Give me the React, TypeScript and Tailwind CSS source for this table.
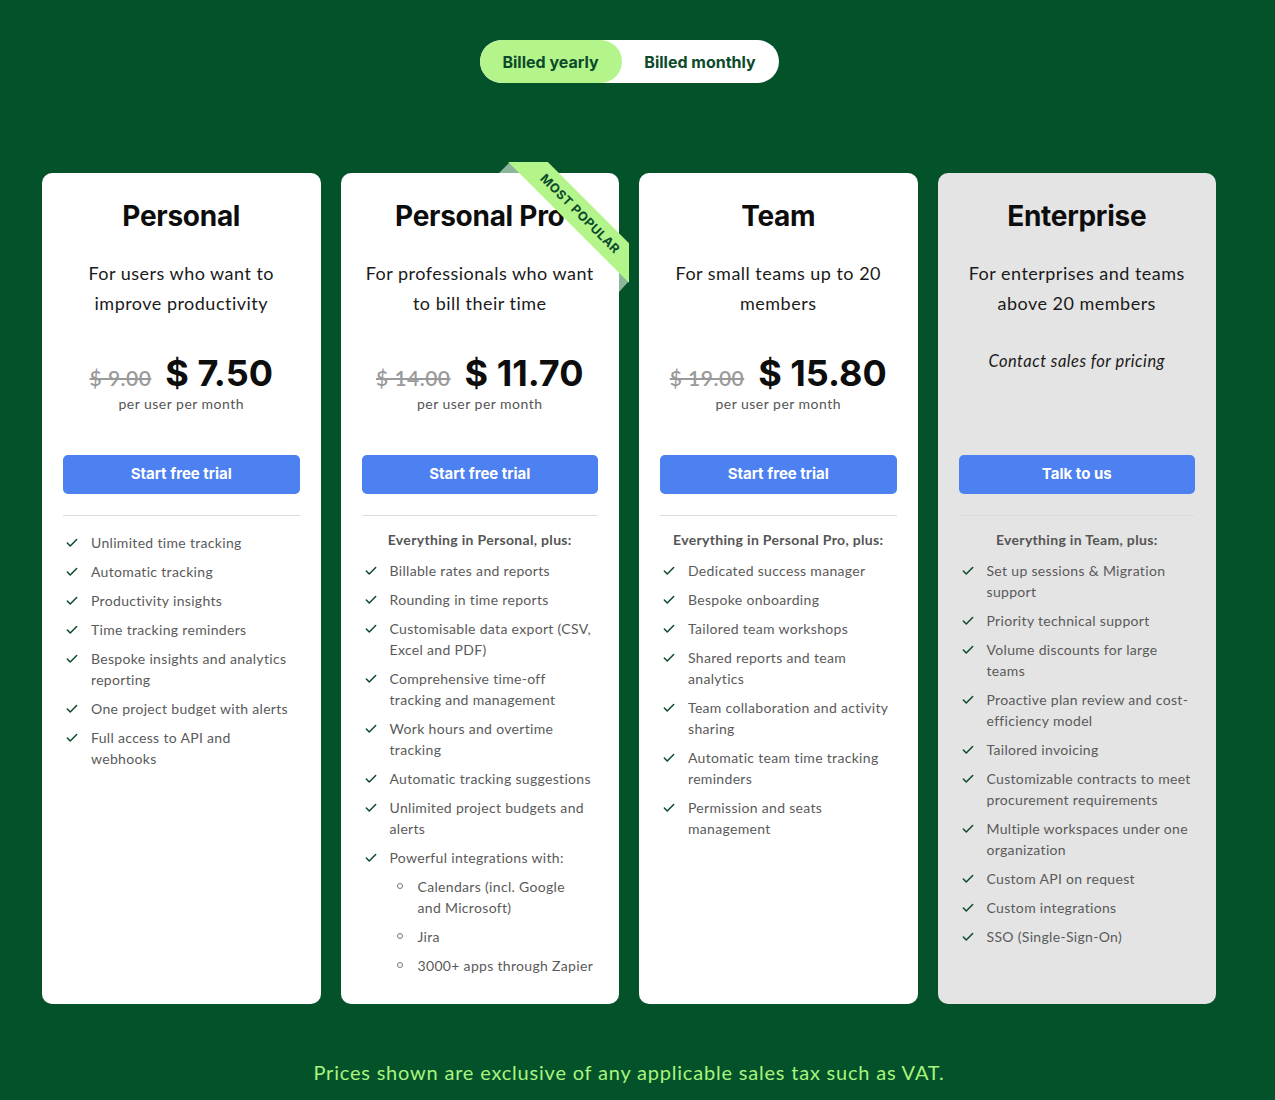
import { Check } from "lucide-react";

type Feature = { text: string; sub?: string[] };

type Plan = {
  name: string;
  desc: string;
  oldPrice?: string;
  price?: string;
  cta: string;
  heading?: string;
  features: Feature[];
  popular?: boolean;
  muted?: boolean;
};

const plans: Plan[] = [
  {
    name: "Personal",
    desc: "For users who want to improve productivity",
    oldPrice: "$ 9.00",
    price: "$ 7.50",
    cta: "Start free trial",
    features: [
      { text: "Unlimited time tracking" },
      { text: "Automatic tracking" },
      { text: "Productivity insights" },
      { text: "Time tracking reminders" },
      { text: "Bespoke insights and analytics reporting" },
      { text: "One project budget with alerts" },
      { text: "Full access to API and webhooks" },
    ],
  },
  {
    name: "Personal Pro",
    desc: "For professionals who want to bill their time",
    oldPrice: "$ 14.00",
    price: "$ 11.70",
    cta: "Start free trial",
    heading: "Everything in Personal, plus:",
    popular: true,
    features: [
      { text: "Billable rates and reports" },
      { text: "Rounding in time reports" },
      { text: "Customisable data export (CSV, Excel and PDF)" },
      { text: "Comprehensive time-off tracking and management" },
      { text: "Work hours and overtime tracking" },
      { text: "Automatic tracking suggestions" },
      { text: "Unlimited project budgets and alerts" },
      {
        text: "Powerful integrations with:",
        sub: ["Calendars (incl. Google\nand Microsoft)", "Jira", "3000+ apps through Zapier"],
      },
    ],
  },
  {
    name: "Team",
    desc: "For small teams up to 20 members",
    oldPrice: "$ 19.00",
    price: "$ 15.80",
    cta: "Start free trial",
    heading: "Everything in Personal Pro, plus:",
    features: [
      { text: "Dedicated success manager" },
      { text: "Bespoke onboarding" },
      { text: "Tailored team workshops" },
      { text: "Shared reports and team analytics" },
      { text: "Team collaboration and activity sharing" },
      { text: "Automatic team time tracking reminders" },
      { text: "Permission and seats management" },
    ],
  },
  {
    name: "Enterprise",
    desc: "For enterprises and teams above 20 members",
    cta: "Talk to us",
    heading: "Everything in Team, plus:",
    muted: true,
    features: [
      { text: "Set up sessions & Migration support" },
      { text: "Priority technical support" },
      { text: "Volume discounts for large teams" },
      { text: "Proactive plan review and cost-efficiency model" },
      { text: "Tailored invoicing" },
      { text: "Customizable contracts to meet procurement requirements" },
      { text: "Multiple workspaces under one organization" },
      { text: "Custom API on request" },
      { text: "Custom integrations" },
      { text: "SSO (Single-Sign-On)" },
    ],
  },
];

const Ribbon = () => (
  <div className="absolute -top-[11px] -right-[10px] w-[130px] h-[130px] overflow-hidden pointer-events-none">
    <svg className="absolute inset-0" width="130" height="130" viewBox="0 0 130 130">
      <polygon points="11,0 0,11 22,11" fill="#8db59b" />
      <polygon points="120,108 130,119 120,130" fill="#8db59b" />
    </svg>
    <div className="absolute left-[-9px] top-[38px] w-[180px] h-[28px] rotate-45 bg-[#b3f58b] flex items-center justify-center">
      <span className="text-[12.5px] font-bold tracking-[0.04em] text-[#0b4a2a] uppercase font-['Inter',sans-serif]">
        Most popular
      </span>
    </div>
  </div>
);

const PlanCard = ({ plan }: { plan: Plan }) => (
  <div
    className={`relative flex flex-col rounded-[10px] px-[21px] pt-[25px] pb-[28px] ${
      plan.muted ? "bg-[#e4e4e4]" : "bg-white"
    }`}
  >
    {plan.popular && <Ribbon />}
    <h2 className="text-center text-[28px] leading-[36px] font-bold text-[#0d0d0d] tracking-[-0.01em] font-['Inter',sans-serif]">
      {plan.name}
    </h2>
    <p className="mt-[24px] text-center text-[18px] leading-[30px] text-[#1a1a1a]">{plan.desc}</p>

    {plan.price ? (
      <div className="mt-[35px] h-[102px] flex flex-col items-center">
        <div className="flex items-baseline gap-[14px]">
          <span className="text-[21px] font-semibold text-[#9a9a9a] line-through">{plan.oldPrice}</span>
          <span className="text-[36px] leading-[40px] font-bold text-[#0d0d0d] tracking-normal font-['Inter',sans-serif]">
            {plan.price}
          </span>
        </div>
        <span className="text-[14px] leading-[20px] text-[#555]">per user per month</span>
      </div>
    ) : (
      <div className="mt-[30px] h-[107px]">
        <p className="text-center text-[16.5px] leading-[26px] italic text-[#1a1a1a]">Contact sales for pricing</p>
      </div>
    )}

    <button className="h-[39px] w-full rounded-[5px] bg-[#4d80f0] text-white text-[15px] font-bold tracking-normal font-['Inter',sans-serif]">
      {plan.cta}
    </button>
    <div className="mt-[21px] h-px bg-[#dcdcdc]" />

    <div className="pt-[13px] tracking-[0.02em]">
      {plan.heading && (
        <p className="text-center text-[14px] leading-[21px] font-bold text-[#555] mb-[10px]">{plan.heading}</p>
      )}
      <ul className={`flex flex-col gap-[8px] ${plan.heading ? "" : "pt-[3px]"}`}>
        {plan.features.map((f) => (
          <li key={f.text}>
            <div className="flex items-start gap-[12px] pl-[2px]">
              <Check className="w-[14px] h-[14px] mt-[4px] shrink-0 text-[#0b4a2a]" strokeWidth={2.6} />
              <span className="text-[14px] leading-[21px] text-[#5a5a5a]">{f.text}</span>
            </div>
            {f.sub && (
              <ul className="mt-[8px] flex flex-col gap-[8px] pl-[35px]">
                {f.sub.map((s) => (
                  <li key={s} className="flex items-start gap-[15px]">
                    <span className="mt-[7px] w-[6px] h-[6px] shrink-0 rounded-full border border-[#777]" />
                    <span className="text-[14px] leading-[21px] text-[#5a5a5a] whitespace-pre-line">{s}</span>
                  </li>
                ))}
              </ul>
            )}
          </li>
        ))}
      </ul>
    </div>
  </div>
);

export default function App() {
  return (
    <div className="min-h-screen bg-[#03522a] font-['Lato',sans-serif] tracking-[0.03em]">
      <div className="w-[1258px] flex flex-col items-center pt-[40px] pb-[16px]">
        <div className="flex h-[43px] rounded-full bg-white overflow-hidden font-['Inter',sans-serif] tracking-normal">
          <button className="w-[142px] bg-[#b3f58b] text-[16px] font-bold text-[#0b4a2a] rounded-full">Billed yearly</button>
          <button className="w-[157px] text-[16px] font-bold text-[#0b4a2a]">Billed monthly</button>
        </div>

        <div className="mt-[90px] grid grid-cols-4 gap-[20px] w-[1174px]">
          {plans.map((p) => (
            <PlanCard key={p.name} plan={p} />
          ))}
        </div>

        <p className="mt-[55px] text-[20px] leading-[26px] tracking-[0.04em] text-[#a8f47e]">
          Prices shown are exclusive of any applicable sales tax such as VAT.
        </p>
      </div>
    </div>
  );
}
